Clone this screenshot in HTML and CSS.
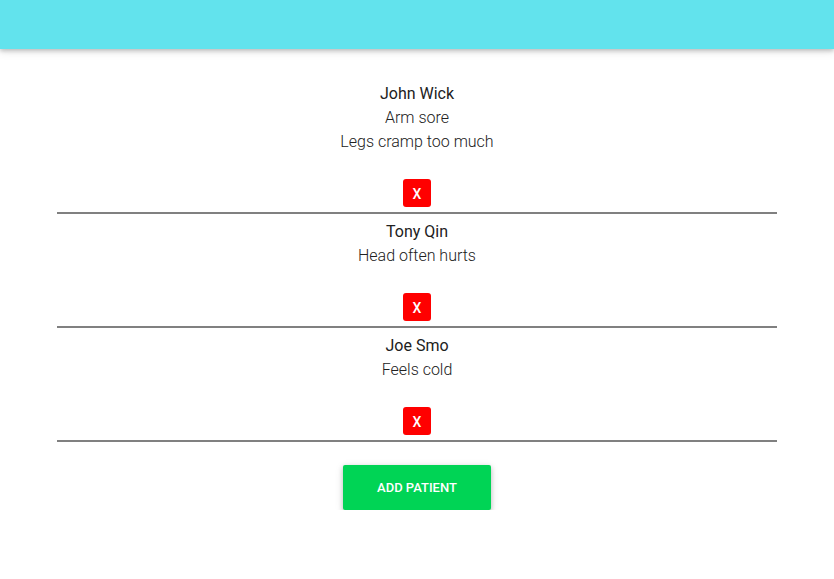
FILE: index.html
```html
<!DOCTYPE html>
<html>
<head>
<meta charset="utf-8">
<link rel="stylesheet" href="styles.css">
</head>
<body>
<header class="topbar"></header>
<main class="list">
  <section class="patient">
    <div class="name">John Wick</div>
    <div class="symptom">Arm sore</div>
    <div class="symptom">Legs cramp too much</div>
    <button class="remove">X</button>
  </section>
  <hr class="divider">
  <section class="patient">
    <div class="name">Tony Qin</div>
    <div class="symptom">Head often hurts</div>
    <button class="remove">X</button>
  </section>
  <hr class="divider">
  <section class="patient">
    <div class="name">Joe Smo</div>
    <div class="symptom">Feels cold</div>
    <button class="remove">X</button>
  </section>
  <hr class="divider">
  <button class="add">Add Patient</button>
</main>
</body>
</html>
```
FILE: styles.css
```css
html, body {
  margin: 0;
  padding: 0;
  background: #fff;
  font-family: Roboto, "Liberation Sans", sans-serif;
}
.topbar {
  height: 49px;
  background: #62e3ed;
  box-shadow: 0 2px 4px rgba(0,0,0,0.2), 0 4px 8px rgba(0,0,0,0.08);
}
.list {
  width: 720px;
  margin: 33px auto 0;
  text-align: center;
}
.patient {
  display: flex;
  flex-direction: column;
  align-items: center;
}
.name {
  font-size: 16px;
  font-weight: 400;
  line-height: 24px;
  color: #212121;
}
.symptom {
  font-size: 16px;
  font-weight: 300;
  line-height: 24px;
  color: #212121;
}
.remove {
  margin-top: 25px;
  width: 28px;
  height: 28px;
  padding: 2px 0 0;
  border: none;
  border-radius: 3px;
  background: #ff0000;
  color: #fff;
  font-family: Roboto, "Liberation Sans", sans-serif;
  font-size: 14px;
  font-weight: 500;
  line-height: 26px;
}
.divider {
  height: 0;
  margin: 5px 0 6px;
  border: none;
  border-top: 2px solid #808080;
}
.add {
  display: block;
  margin: 23px auto 0;
  width: 148px;
  height: 45px;
  padding: 0;
  border: none;
  border-radius: 2px;
  background: #00d455;
  color: #fff;
  font-family: Roboto, "Liberation Sans", sans-serif;
  font-size: 13px;
  font-weight: 500;
  text-transform: uppercase;
  box-shadow: 0 2px 5px rgba(0,0,0,0.22), 0 2px 10px rgba(0,0,0,0.1);
}
```
